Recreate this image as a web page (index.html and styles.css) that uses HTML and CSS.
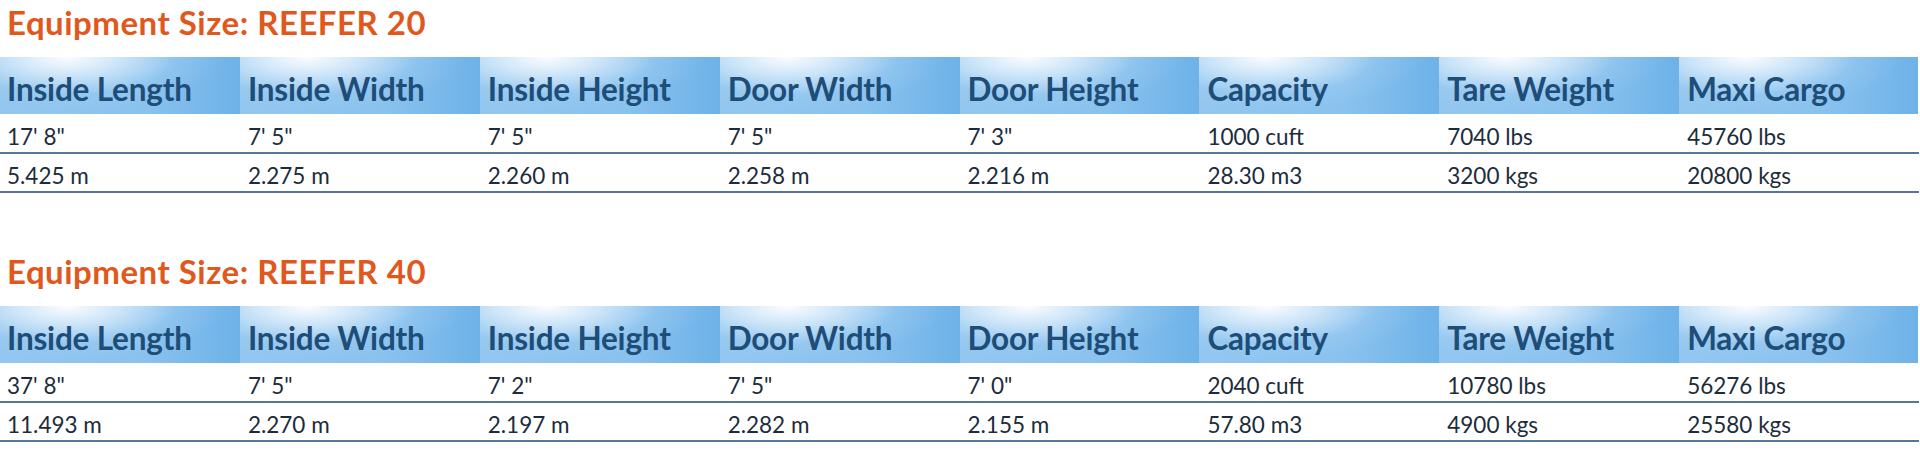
FILE: index.html
```html
<!DOCTYPE html>
<html lang="en">
<head>
<meta charset="utf-8">
<title>Equipment Size: REEFER</title>
<link rel="stylesheet" href="styles.css">
</head>
<body>
<section class="equip">
  <h2 class="equip-title">Equipment Size: REEFER 20</h2>
  <table class="spec">
    <thead>
      <tr>
        <th>Inside Length</th><th>Inside Width</th><th>Inside Height</th><th>Door Width</th><th>Door Height</th><th>Capacity</th><th>Tare Weight</th><th>Maxi Cargo</th>
      </tr>
    </thead>
    <tbody>
      <tr>
        <td>17' 8"</td><td>7' 5"</td><td>7' 5"</td><td>7' 5"</td><td>7' 3"</td><td>1000 cuft</td><td>7040 lbs</td><td>45760 lbs</td>
      </tr>
      <tr>
        <td>5.425 m</td><td>2.275 m</td><td>2.260 m</td><td>2.258 m</td><td>2.216 m</td><td>28.30 m3</td><td>3200 kgs</td><td>20800 kgs</td>
      </tr>
    </tbody>
  </table>
</section>
<section class="equip">
  <h2 class="equip-title">Equipment Size: REEFER 40</h2>
  <table class="spec">
    <thead>
      <tr>
        <th>Inside Length</th><th>Inside Width</th><th>Inside Height</th><th>Door Width</th><th>Door Height</th><th>Capacity</th><th>Tare Weight</th><th>Maxi Cargo</th>
      </tr>
    </thead>
    <tbody>
      <tr>
        <td>37' 8"</td><td>7' 5"</td><td>7' 2"</td><td>7' 5"</td><td>7' 0"</td><td>2040 cuft</td><td>10780 lbs</td><td>56276 lbs</td>
      </tr>
      <tr>
        <td>11.493 m</td><td>2.270 m</td><td>2.197 m</td><td>2.282 m</td><td>2.155 m</td><td>57.80 m3</td><td>4900 kgs</td><td>25580 kgs</td>
      </tr>
    </tbody>
  </table>
</section>
</body>
</html>
```
FILE: styles.css
```css
html, body {
  margin: 0;
  padding: 0;
  background: #ffffff;
}
body {
  font-family: Lato, "Liberation Sans", sans-serif;
  width: 1920px;
  height: 454px;
  overflow: hidden;
}
.equip {
  padding-bottom: 56px;
}
.equip:last-child {
  padding-bottom: 0;
}
.equip-title {
  margin: 0;
  padding: 0 0 0 7px;
  height: 57px;
  line-height: 44px;
  font-size: 33px;
  font-weight: 700;
  color: #e1581d;
  letter-spacing: 0.5px;
}
.spec {
  width: 1920px;
  border-collapse: collapse;
  table-layout: fixed;
}
.spec th {
  height: 57px;
  padding: 6px 0 0 7px;
  box-sizing: border-box;
  text-align: left;
  font-size: 31.5px;
  font-weight: 700;
  color: #1e4d78;
  letter-spacing: -0.2px;
  white-space: nowrap;
  background:
    radial-gradient(ellipse 65% 95% at 28% 0%, rgba(255,255,255,0.97) 0%, rgba(214,234,250,0.85) 35%, rgba(160,205,242,0.4) 70%, rgba(140,194,238,0) 100%),
    linear-gradient(90deg, #93c7ef 0%, #8ac2ee 60%, #6eb2e8 100%);
}
.spec th + th {
  padding-left: 8px;
}
.spec th:last-child {
  border-right: 2px solid #ffffff;
}
.spec td {
  height: 39px;
  padding: 6px 0 0 7px;
  box-sizing: border-box;
  font-size: 22.5px;
  font-weight: 400;
  color: #1d2c3b;
  border-bottom: 2px solid #56779a;
  white-space: nowrap;
  vertical-align: middle;
}
.spec td + td {
  padding-left: 8px;
}
```
